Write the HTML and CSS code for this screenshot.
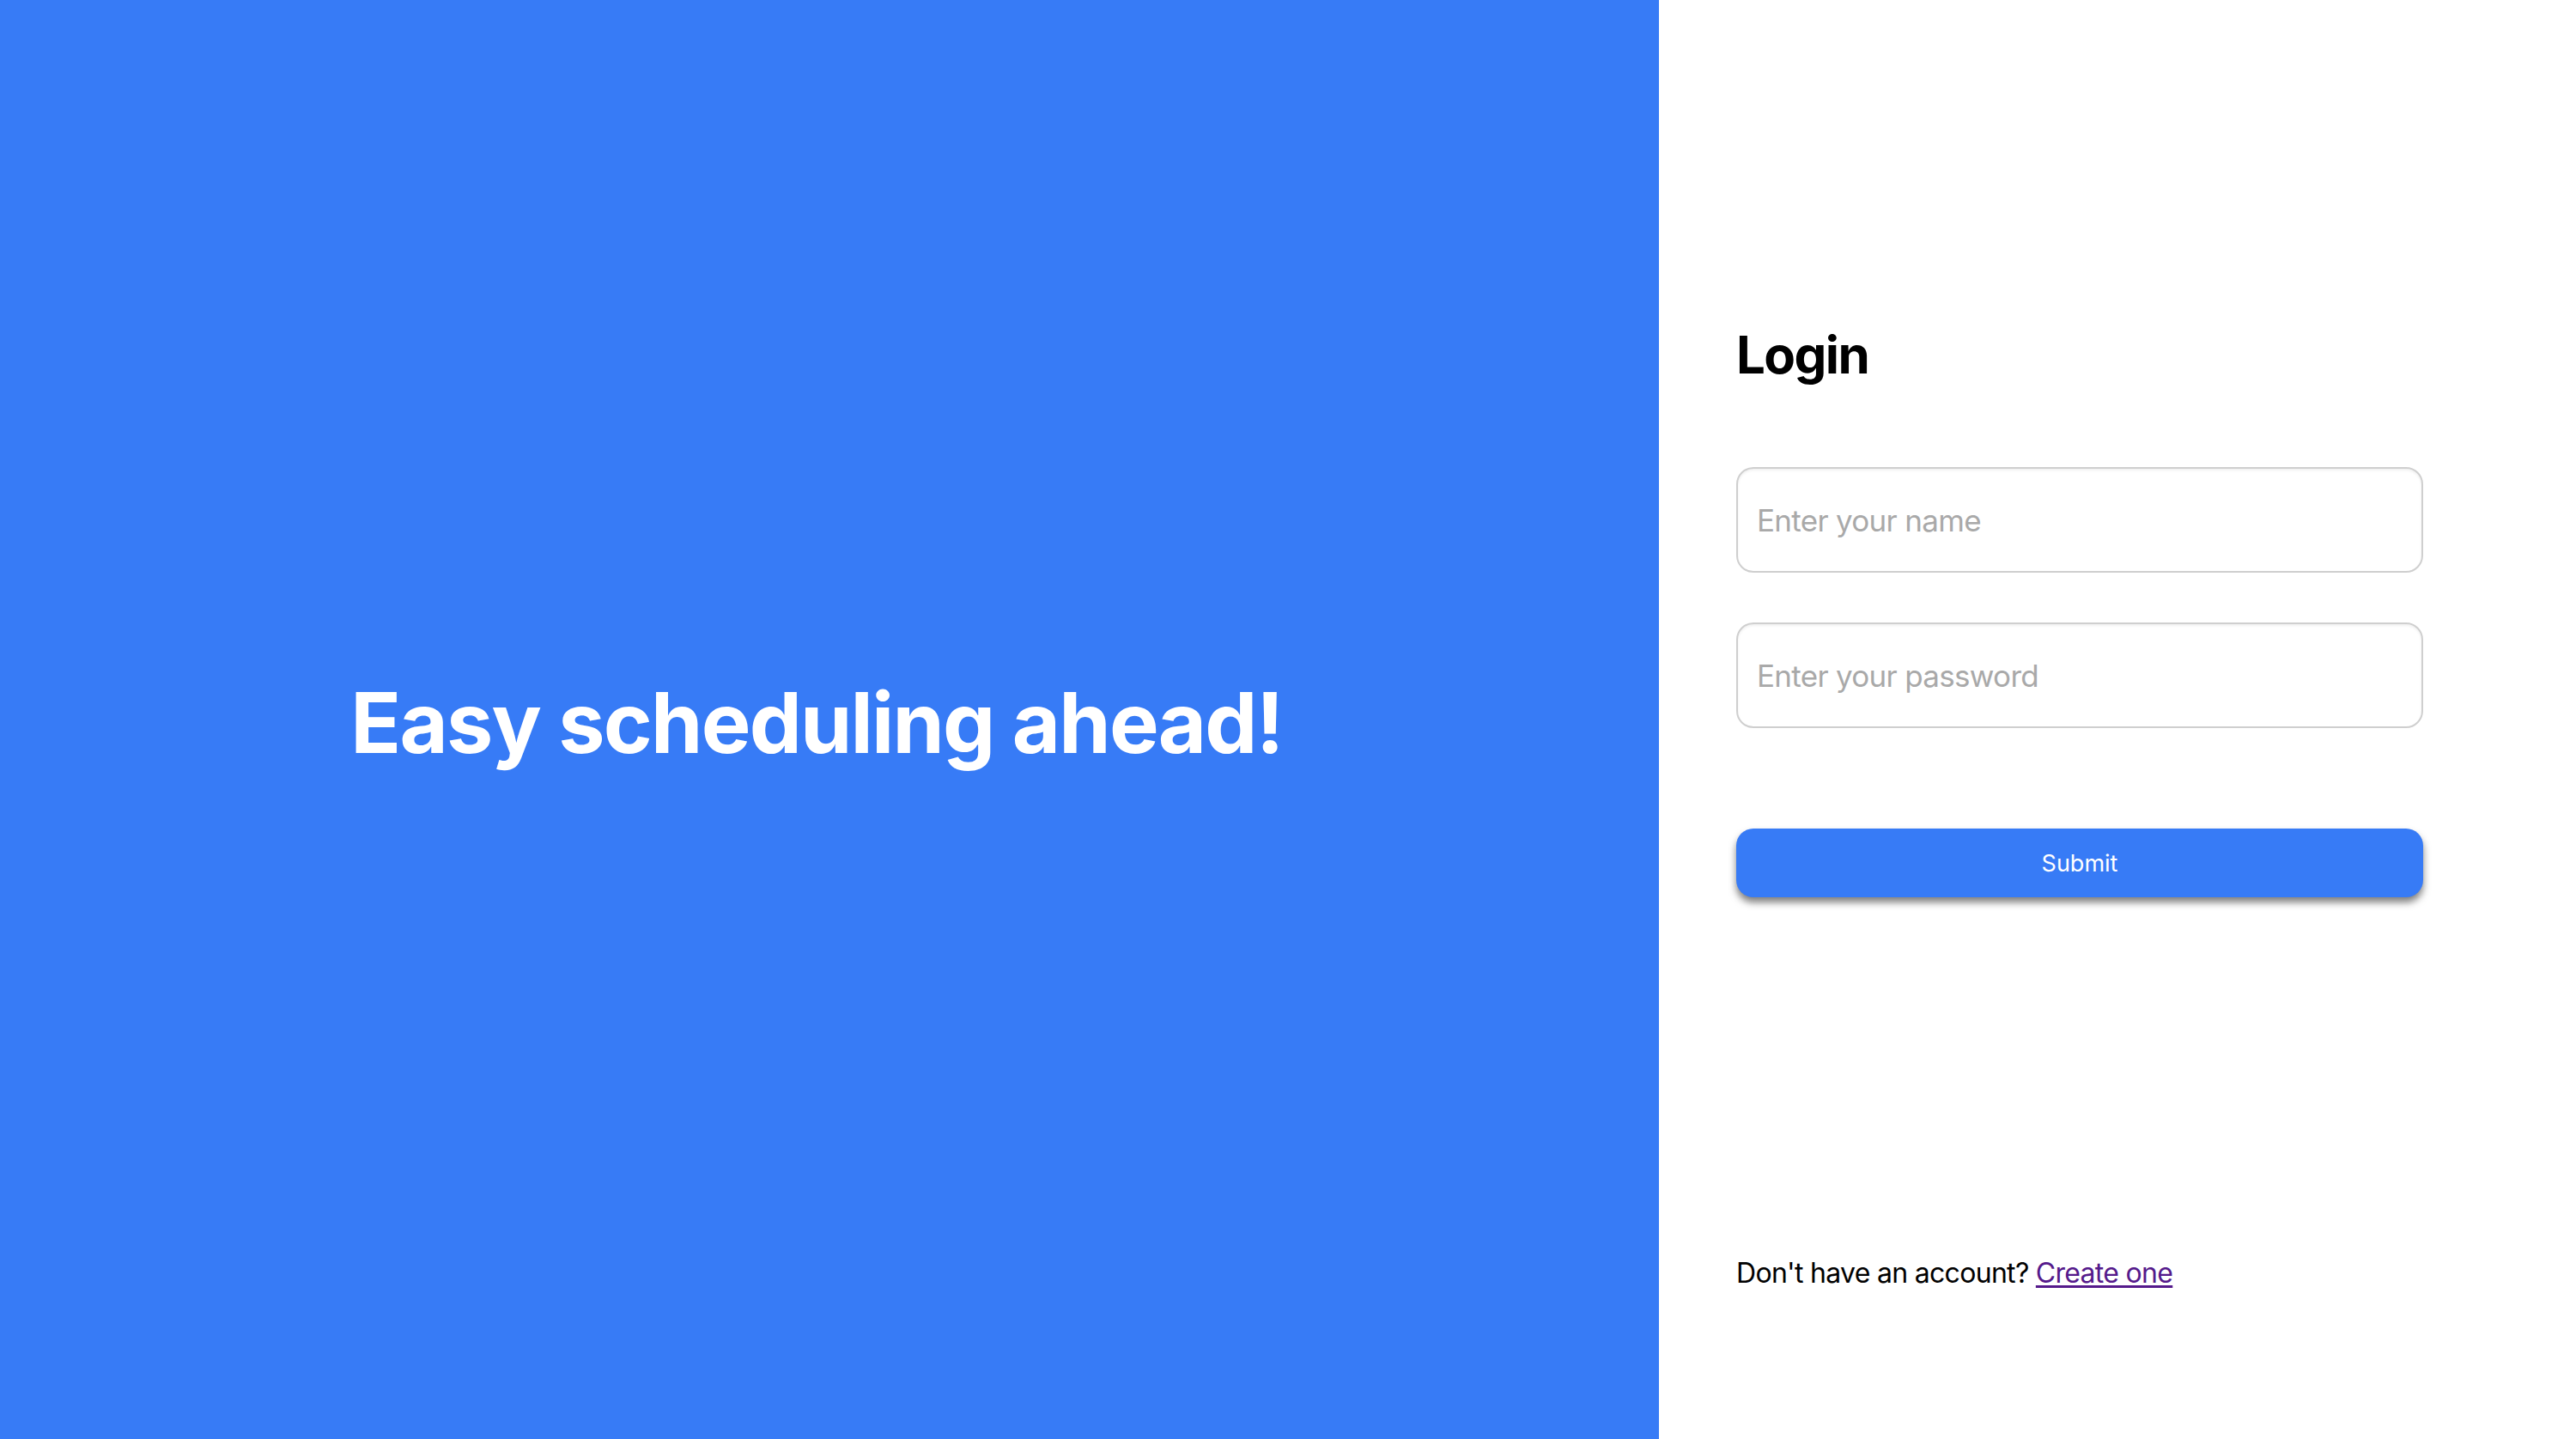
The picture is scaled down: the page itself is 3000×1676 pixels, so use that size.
FILE: index.html
```html
<!DOCTYPE html>
<html lang="en">
<head>
<meta charset="utf-8">
<title>Login</title>
<link rel="stylesheet" href="styles.css">
</head>
<body>
<div class="page">
  <section class="hero">
    <h1 class="hero-title">Easy scheduling ahead!</h1>
  </section>
  <section class="auth">
    <h2 class="auth-title">Login</h2>
    <form class="auth-form">
      <input class="field" type="text" placeholder="Enter your name">
      <input class="field" type="password" placeholder="Enter your password">
      <button class="submit" type="button">Submit</button>
    </form>
    <p class="footer">Don't have an account? <a class="link" href="#">Create one</a></p>
  </section>
</div>
</body>
</html>
```
FILE: styles.css
```css
html, body {
  margin: 0;
  padding: 0;
}
body {
  font-family: Inter, "Noto Sans", sans-serif;
  background: #ffffff;
  color: #000000;
}
.page {
  display: flex;
  height: 1676px;
  width: 3000px;
}
.hero {
  width: 1932px;
  flex: 0 0 1932px;
  background: #377bf6;
  display: flex;
  align-items: center;
  justify-content: center;
}
.hero-title {
  margin: 0;
  color: #ffffff;
  font-size: 97px;
  font-weight: 700;
  letter-spacing: -1.8px;
  line-height: normal;
  transform: translate(-15px, 3px);
}
.auth {
  flex: 1;
  padding: 377px 0 0 90px;
  display: flex;
  flex-direction: column;
}
.auth-title {
  margin: 0;
  font-size: 60px;
  font-weight: 700;
  letter-spacing: -1.6px;
  line-height: normal;
}
.auth-form {
  width: 800px;
  margin-top: 95px;
  display: flex;
  flex-direction: column;
}
.field {
  box-sizing: border-box;
  height: 123px;
  width: 100%;
  border: 2px solid #cfcfcf;
  border-radius: 20px;
  padding: 0 22px;
  font-family: Inter, "Noto Sans", sans-serif;
  font-size: 35px;
  letter-spacing: -0.7px;
  color: #222;
  background: #fff;
  box-shadow: inset 0 2px 3px rgba(0,0,0,0.06);
  outline: none;
}
.field::placeholder {
  color: #a9a9a9;
}
.field + .field {
  margin-top: 58px;
}
.submit {
  margin-top: 117px;
  height: 80px;
  width: 100%;
  border: none;
  border-radius: 20px;
  background: #377bf6;
  color: #ffffff;
  font-family: Inter, "Noto Sans", sans-serif;
  font-size: 27px;
  padding-top: 2px;
  box-shadow: 0 6px 9px rgba(0,0,0,0.5);
  cursor: pointer;
}
.footer {
  margin: 418px 0 0 0;
  font-size: 32px;
  letter-spacing: -0.7px;
  line-height: normal;
}
.link {
  color: #551a8b;
  text-decoration: underline;
  text-underline-offset: 3px;
}
```
